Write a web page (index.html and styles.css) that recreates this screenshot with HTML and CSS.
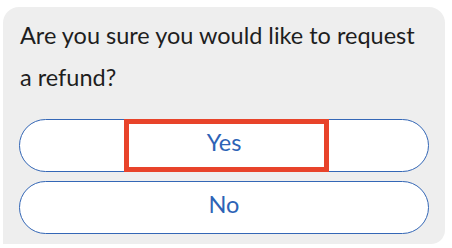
FILE: index.html
```html
<!DOCTYPE html>
<html lang="en">
<head>
<meta charset="utf-8">
<title>Refund</title>
<link rel="stylesheet" href="styles.css">
</head>
<body>
<div class="card">
  <p class="question">Are you sure you would like to request a refund?</p>
  <div class="actions">
    <div class="action">
      <button class="btn">Yes</button>
      <span class="focus-ring"></span>
    </div>
    <div class="action">
      <button class="btn">No</button>
    </div>
  </div>
</div>
</body>
</html>
```
FILE: styles.css
```css
html, body {
  margin: 0;
  padding: 0;
  background: #ffffff;
}
body {
  font-family: "Lato", "Noto Sans", sans-serif;
}
.card {
  box-sizing: border-box;
  width: 442px;
  margin: 7px 0 0 3px;
  padding: 7px 16px 10px 16px;
  background: #eeeeee;
  border-radius: 16px 16px 14px 0;
}
.question {
  margin: 0 0 21px 0;
  padding-left: 1px;
  font-size: 23.5px;
  line-height: 42px;
  color: #1e1e1e;
}
.actions {
  display: flex;
  flex-direction: column;
  gap: 9px;
}
.action {
  position: relative;
}
.btn {
  box-sizing: border-box;
  display: flex;
  align-items: center;
  justify-content: center;
  width: 100%;
  height: 53px;
  margin: 0;
  padding: 0 0 7px 0;
  background: #ffffff;
  border: 1px solid #3467b6;
  border-radius: 27px;
  font-family: "Lato", "Noto Sans", sans-serif;
  font-size: 23.5px;
  color: #2d63b6;
}
.focus-ring {
  position: absolute;
  top: 0;
  left: 105px;
  width: 205px;
  height: 53px;
  box-sizing: border-box;
  border: 5px solid #e8432a;
  pointer-events: none;
}
```
